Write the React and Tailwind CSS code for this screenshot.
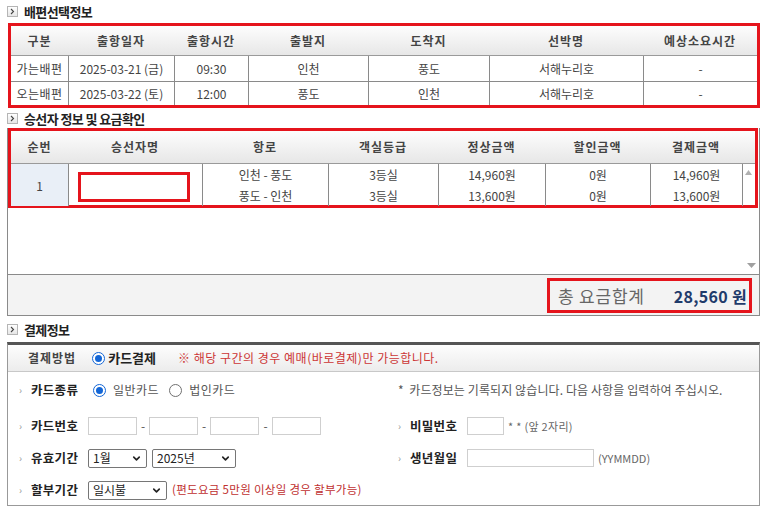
import React from 'react';
import { ChevronDown } from 'lucide-react';

const Icon = () => (
  <span className="w-[11px] h-[11px] border border-[#b5b5b5] bg-linear-to-b from-white to-[#e6e6e6] flex items-center justify-center shrink-0">
    <svg width="5" height="7" viewBox="0 0 5 7">
      <path d="M1 1l2.5 2.5L1 6" stroke="#444" strokeWidth="1.1" fill="none" />
    </svg>
  </span>
);

function SectionTitle({ children, className }) {
  return (
    <div className={'flex items-center pl-[7px] ' + className}>
      <Icon />
      <span className="ml-[6px] text-[13px] font-bold text-[#222] tracking-[-0.6px] leading-none">{children}</span>
    </div>
  );
}

const Radio = ({ on }) =>
  on ? (
    <span className="w-[13px] h-[13px] rounded-full border-[1.5px] border-[#1366d6] bg-white flex items-center justify-center shrink-0">
      <span className="w-[7px] h-[7px] rounded-full bg-[#1366d6] block" />
    </span>
  ) : (
    <span className="w-[13px] h-[13px] rounded-full border border-[#707070] bg-white shrink-0 block" />
  );

const Select = ({ w, children }) => (
  <div className={w + ' h-[19px] border border-[#767676] rounded-[2px] bg-white flex items-center justify-between pl-[4px] pr-[4px] text-[12px] text-[#222]'}>
    <span className="leading-none">{children}</span>
    <ChevronDown size={11} strokeWidth={3.5} color="#222" />
  </div>
);

const Bullet = () => (
  <span className="w-[12px] text-[10px] text-[#999] leading-none">›</span>
);

const Label = ({ children }) => (
  <span className="w-[57px] text-[12.5px] font-bold text-[#222] tracking-[0.3px] leading-none">{children}</span>
);

const Input = ({ w }) => <span className={w + ' h-[18px] border border-[#cfcfcf] bg-white block'} />;

const hdr1 = ['구분', '출항일자', '출항시간', '출발지', '도착지', '선박명', '예상소요시간'];
const rows1 = [
  ['가는배편', '2025-03-21 (금)', '09:30', '인천', '풍도', '서해누리호', '-'],
  ['오는배편', '2025-03-22 (토)', '12:00', '풍도', '인천', '서해누리호', '-'],
];

const hdr2 = ['순번', '승선자명', '항로', '객실등급', '정상금액', '할인금액', '결제금액'];

export default function App() {
  return (
    <div className="w-[766px] h-[512px] bg-white overflow-hidden font-['Noto_Sans_CJK_KR','Noto_Sans',sans-serif] text-[#444]">
      {/* Section 1 */}
      <SectionTitle className="h-[23px]">배편선택정보</SectionTitle>
      <div className="ml-[8px] w-[752px] border-[3px] border-[#e5141c]">
        <div className="grid grid-cols-[57px_106px_74px_120px_121px_154px_114px] h-[30px] bg-linear-to-b from-[#fdfdfd] to-[#e7e7e7] border-b border-[#9a9a9a]">
          {hdr1.map((h) => (
            <div key={h} className="flex items-center justify-center text-[12px] font-bold text-[#444] tracking-[1px]">{h}</div>
          ))}
        </div>
        {rows1.map((r, i) => (
          <div
            key={i}
            className={
              'grid grid-cols-[57px_106px_74px_120px_121px_154px_114px] ' +
              (i === 0 ? 'h-[26px] border-b border-[#8a8a8a]' : 'h-[23px]')
            }
          >
            {r.map((c, j) => (
              <div
                key={j}
                className={
                  'flex items-center justify-center text-[12px] text-[#444] ' +
                  (j > 0 ? 'border-l border-[#8a8a8a]' : '') +
                  (j === 0 ? ' tracking-[0.5px]' : '')
                }
              >
                {c}
              </div>
            ))}
          </div>
        ))}
      </div>

      {/* Section 2 */}
      <SectionTitle className="h-[20px]">승선자 정보 및 요금확인</SectionTitle>
      <div className="ml-[7px] w-[753px] h-[188px] border-x border-b border-[#8a8a8a] flex flex-col">
        <div className="w-[750px] h-[80px] border-[3px] border-[#e5141c] shrink-0">
          <div className="grid grid-cols-[57px_134px_126px_110px_107px_105px_92px_12px] h-[33px] bg-linear-to-b from-[#fdfdfd] to-[#e7e7e7] border-b border-[#9a9a9a]">
            {hdr2.map((h) => (
              <div key={h} className="flex items-center justify-center text-[12px] font-bold text-[#444] tracking-[1px]">{h}</div>
            ))}
            <div />
          </div>
          <div className="grid grid-cols-[57px_134px_126px_110px_107px_105px_92px_12px] h-[41px] text-[12px] text-[#444] leading-[21px]">
            <div className="flex items-center justify-center bg-[#e9eff7]">1</div>
            <div className="border-l border-[#8a8a8a] flex items-center pl-[9px] pt-[3px]">
              <div className="w-[112px] h-[30px] border-[3px] border-[#e5141c] bg-white" />
            </div>
            <div className="border-l border-[#8a8a8a] flex flex-col items-center justify-center">
              <span>인천 - 풍도</span>
              <span>풍도 - 인천</span>
            </div>
            <div className="border-l border-[#8a8a8a] flex flex-col items-center justify-center">
              <span>3등실</span>
              <span>3등실</span>
            </div>
            <div className="border-l border-[#8a8a8a] flex flex-col items-center justify-center">
              <span>14,960원</span>
              <span>13,600원</span>
            </div>
            <div className="border-l border-[#8a8a8a] flex flex-col items-center justify-center">
              <span>0원</span>
              <span>0원</span>
            </div>
            <div className="border-l border-[#8a8a8a] flex flex-col items-center justify-center">
              <span>14,960원</span>
              <span>13,600원</span>
            </div>
            <div className="border-l border-[#8a8a8a] flex justify-center pt-[6px]">
              <svg width="7" height="5" viewBox="0 0 7 5"><path d="M0 5L3.5 0L7 5Z" fill="#b0b0b0" /></svg>
            </div>
          </div>
        </div>
        <div className="flex-1 flex justify-end items-end pr-[3px] pb-[6px]">
          <svg width="9" height="5" viewBox="0 0 9 5"><path d="M0 0L4.5 5L9 0Z" fill="#a0a0a0" /></svg>
        </div>
        <div className="h-[41px] border-t border-[#8a8a8a] bg-[#f3f3f3] flex justify-end items-start shrink-0">
          <div className="mt-[3px] mr-[7px] w-[205px] h-[35px] border-[3px] border-[#e5141c] flex items-center justify-between pl-[8px] pr-[2px]">
            <span className="text-[17px] text-[#666] tracking-[0.8px]">총 요금합계</span>
            <span className="text-[16px] font-bold text-[#1f3b6b] tracking-[0.3px]">28,560 원</span>
          </div>
        </div>
      </div>

      {/* Section 3 */}
      <SectionTitle className="h-[26px]">결제정보</SectionTitle>
      <div className="ml-[7px] w-[753px] border-t-[3px] border-t-[#555] border-x border-b border-x-[#999] border-b-[#999]">
        <div className="h-[27px] bg-linear-to-b from-[#fdfdfd] to-[#ececec] border-b border-[#c8c8c8] flex items-center pl-[20px]">
          <span className="text-[12px] font-bold text-[#444] tracking-[1px]">결제방법</span>
          <span className="ml-[16px] flex"><Radio on /></span>
          <span className="ml-[3px] text-[13px] font-bold text-[#222]">카드결제</span>
          <span className="ml-[22px] text-[12px] text-[#cc3535] tracking-[0.5px]">※ 해당 구간의 경우 예매(바로결제)만 가능합니다.</span>
        </div>

        <div className="grid grid-cols-[390px_1fr]">
          {/* row 1 */}
          <div className="mt-[4px] h-[28px] flex items-center pl-[11px]">
            <Bullet />
            <Label>카드종류</Label>
            <span className="ml-[5px] flex"><Radio on /></span>
            <span className="ml-[7px] text-[12px] text-[#555] tracking-[0.5px]">일반카드</span>
            <span className="ml-[10px] flex"><Radio /></span>
            <span className="ml-[7px] text-[12px] text-[#555] tracking-[0.5px]">법인카드</span>
          </div>
          <div className="mt-[4px] h-[28px] flex items-center text-[12px] text-[#555] tracking-[0.1px]">
            *&nbsp; 카드정보는 기록되지 않습니다. 다음 사항을 입력하여 주십시오.
          </div>

          {/* row 2 */}
          <div className="mt-[8px] h-[28px] flex items-center pl-[11px]">
            <Bullet />
            <Label>카드번호</Label>
            <Input w="w-[49px]" />
            <span className="w-[12px] text-center text-[12px] text-[#555]">-</span>
            <Input w="w-[49px]" />
            <span className="w-[12px] text-center text-[12px] text-[#555]">-</span>
            <Input w="w-[49px]" />
            <span className="w-[13px] text-center text-[12px] text-[#555]">-</span>
            <Input w="w-[49px]" />
          </div>
          <div className="mt-[8px] h-[28px] flex items-center">
            <Bullet />
            <Label>비밀번호</Label>
            <Input w="w-[37px]" />
            <span className="ml-[4px] text-[11px] text-[#666] tracking-[0.3px]">* * (앞 2자리)</span>
          </div>

          {/* row 3 */}
          <div className="mt-[4px] h-[28px] flex items-center pl-[11px]">
            <Bullet />
            <Label>유효기간</Label>
            <Select w="w-[59px]">1월</Select>
            <span className="ml-[5px] flex"><Select w="w-[84px]">2025년</Select></span>
          </div>
          <div className="mt-[4px] h-[28px] flex items-center">
            <Bullet />
            <Label>생년월일</Label>
            <Input w="w-[127px]" />
            <span className="ml-[4px] text-[11px] text-[#666]">(YYMMDD)</span>
          </div>

          {/* row 4 */}
          <div className="mt-[4px] mb-[1px] h-[28px] flex items-center pl-[11px]">
            <Bullet />
            <Label>할부기간</Label>
            <Select w="w-[79px]">일시불</Select>
            <span className="ml-[5px] text-[11.5px] text-[#c03030] tracking-[0.3px]">(편도요금 5만원 이상일 경우 할부가능)</span>
          </div>
          <div />
        </div>
      </div>
    </div>
  );
}
